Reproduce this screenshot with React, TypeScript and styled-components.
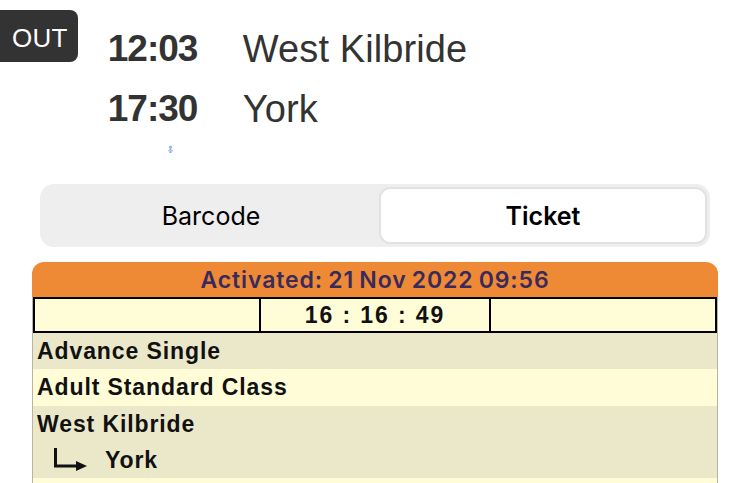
import React from "react";
import styled, { createGlobalStyle } from "styled-components";

const Global = createGlobalStyle`
  html, body { margin: 0; padding: 0; background: #ffffff; }
  body { font-family: "Liberation Sans", Arial, sans-serif; overflow: hidden; }
`;

const Page = styled.div`
  width: 750px;
  height: 483px;
  overflow: hidden;
`;

const Header = styled.div`
  display: flex;
  align-items: flex-start;
  padding-top: 10px;
`;

const Badge = styled.div`
  box-sizing: border-box;
  height: 52px;
  margin-left: -10px;
  padding: 2px 10px 0 22px;
  line-height: 52px;
  background: #333333;
  color: #ffffff;
  font-size: 26px;
  letter-spacing: 0.3px;
  border-radius: 8px;
`;

const Times = styled.div`
  margin-left: 30px;
  margin-top: 9px;
  display: grid;
  grid-template-columns: 135px auto;
  color: #333333;
  line-height: 60px;
`;

const Time = styled.div`
  font-size: 37px;
  font-weight: 700;
  letter-spacing: -1px;
`;

const Station = styled.div`
  font-size: 38px;
  font-weight: 400;
  letter-spacing: 0.1px;
`;

const Loader = styled.div`
  height: 8px;
  margin: 6px 0 0 167px;
  display: flex;
`;

const Segmented = styled.div`
  margin: 31px 40px 0 40px;
  height: 63px;
  box-sizing: border-box;
  padding: 3px;
  border-radius: 14px;
  background: #eeeeee;
  display: grid;
  grid-template-columns: 336px 1fr;
  font-family: Inter, "Liberation Sans", sans-serif;
`;

const Segment = styled.div<{ $active?: boolean }>`
  display: flex;
  align-items: center;
  justify-content: center;
  box-sizing: border-box;
  border-radius: 11px;
  font-size: 25px;
  color: #000000;
  font-weight: ${(p) => (p.$active ? 600 : 400)};
  background: ${(p) => (p.$active ? "#ffffff" : "transparent")};
  border: ${(p) => (p.$active ? "2px solid #e2e2e2" : "none")};
`;

const Ticket = styled.div`
  margin: 15px 32px 0 32px;
  display: flex;
  flex-direction: column;
  border-radius: 12px 12px 0 0;
  overflow: hidden;
`;

const TicketHeader = styled.div`
  height: 35px;
  background: #ee8a36;
  color: #3a2a5c;
  font-family: Inter, "Liberation Sans", sans-serif;
  font-size: 23px;
  font-weight: 600;
  letter-spacing: 0.9px;
  word-spacing: -1.5px;
  display: flex;
  align-items: center;
  justify-content: center;
  padding-top: 1px;
  box-sizing: border-box;
`;

const Body = styled.div`
  border-left: 1px solid #b9b6a0;
  border-right: 1px solid #b9b6a0;
  display: flex;
  flex-direction: column;
`;

const TimerRow = styled.div`
  height: 36px;
  flex: none;
  box-sizing: border-box;
  border: 2px solid #000000;
  background: #fffcd8;
  display: grid;
  grid-template-columns: 224px 230px 1fr;
`;

const TimerCell = styled.div<{ $divider?: boolean }>`
  display: flex;
  align-items: center;
  justify-content: center;
  font-size: 23px;
  font-weight: 700;
  letter-spacing: 1.9px;
  color: #111111;
  border-left: ${(p) => (p.$divider ? "2px solid #000000" : "none")};
`;

const InfoRow = styled.div<{ $tone: "dark" | "light"; $h: number }>`
  height: ${(p) => p.$h}px;
  flex: none;
  background: ${(p) => (p.$tone === "dark" ? "#ebe7c9" : "#fffcd7")};
  padding-left: 4px;
  display: flex;
  flex-direction: column;
  justify-content: center;
  font-size: 23px;
  font-weight: 700;
  letter-spacing: 0.9px;
  color: #111111;
`;

const Line = styled.div`
  height: 36px;
  display: flex;
  align-items: center;
`;

const Arrow = styled.svg`
  margin: 0 17px 0 15px;
  flex: none;
`;

export default function App() {
  return (
    <Page>
      <Global />
      <Header>
        <Badge>OUT</Badge>
        <Times>
          <Time>12:03</Time>
          <Station>West Kilbride</Station>
          <Time>17:30</Time>
          <Station>York</Station>
        </Times>
      </Header>
      <Loader>
        <svg width="7" height="9" viewBox="0 0 7 9">
          <circle cx="3.5" cy="2" r="1.6" fill="#9db3e8" />
          <rect x="2.6" y="3.5" width="1.8" height="4.5" fill="#7f9de0" />
          <rect x="1" y="5" width="5" height="1.3" fill="#b8c8f0" />
        </svg>
      </Loader>
      <Segmented>
        <Segment>Barcode</Segment>
        <Segment $active>Ticket</Segment>
      </Segmented>
      <Ticket>
        <TicketHeader>Activated: 21 Nov 2022 09:56</TicketHeader>
        <Body>
          <TimerRow>
            <TimerCell />
            <TimerCell $divider>16 : 16 : 49</TimerCell>
            <TimerCell $divider />
          </TimerRow>
          <InfoRow $tone="dark" $h={36}>Advance Single</InfoRow>
          <InfoRow $tone="light" $h={37}>Adult Standard Class</InfoRow>
          <InfoRow $tone="dark" $h={72}>
            <Line>West Kilbride</Line>
            <Line>
              <Arrow width="36" height="24" viewBox="0 0 36 24">
                <path d="M3.5 0 V18 H25" stroke="#111" strokeWidth="3" fill="none" />
                <polygon points="24,13 35,18 24,23" fill="#111" />
              </Arrow>
              York
            </Line>
          </InfoRow>
          <InfoRow $tone="light" $h={36} />
        </Body>
      </Ticket>
    </Page>
  );
}
